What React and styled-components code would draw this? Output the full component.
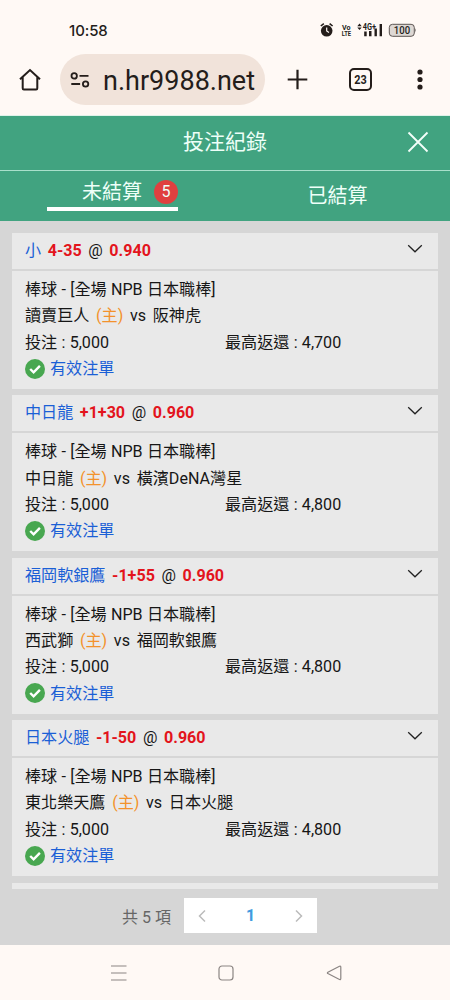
import { useState } from "react";
import styled, { createGlobalStyle } from "styled-components";

const GlobalStyle = createGlobalStyle`
  * {
    box-sizing: border-box;
  }
  body {
    margin: 0;
    background: #fff9f5;
    font-family: Roboto, "Noto Sans CJK TC", sans-serif;
    color: #161616;
  }
  button {
    border: 0;
    padding: 0;
    background: none;
    font: inherit;
    color: inherit;
    cursor: pointer;
  }
  svg {
    display: block;
    flex: none;
  }
`;

const Screen = styled.div`
  width: 450px;
  height: 1000px;
  display: flex;
  flex-direction: column;
  overflow: hidden;
`;

const StatusBar = styled.div`
  height: 54px;
  padding: 6px 33px 0 69px;
  display: flex;
  align-items: center;
  justify-content: space-between;
  color: #241d1a;
`;

const Clock = styled.span`
  font-family: Inter, sans-serif;
  font-size: 15px;
  font-weight: 450;
  letter-spacing: -0.1px;
`;

const StatusIcons = styled.div`
  display: flex;
  align-items: center;
  svg text {
    font-family: Roboto, sans-serif;
    font-weight: 700;
  }
`;

const BrowserBar = styled.div`
  height: 62px;
  padding: 0 25px 10px 19px;
  display: flex;
  align-items: center;
  color: #241d1a;
  border-bottom: 1px solid #dff3ea;
`;

const AddressPill = styled.div`
  width: 205px;
  height: 51px;
  margin: 0 22px 0 19px;
  padding: 0 10px;
  display: flex;
  align-items: center;
  border-radius: 26px;
  background: #f1e3da;
`;

const Url = styled.div`
  flex: 1;
  margin-top: 3px;
  text-align: right;
  white-space: nowrap;
  font-size: 27px;
  line-height: 40px;
`;

const TabCount = styled.button`
  width: 23px;
  height: 23px;
  margin: 0 45px 0 41px;
  border: 2px solid #241d1a;
  border-radius: 5px;
  svg {
    margin: 0 auto;
  }
`;

const Header = styled.header`
  height: 55px;
  padding: 0 21px 0 41px;
  display: flex;
  align-items: center;
  color: #eefff8;
  background: #41a380;
  border-bottom: 1px solid #a9e0cb;
  button {
    margin-bottom: 2px;
  }
  h1 {
    flex: 1;
    margin: 0;
    padding: 0 0 2px 2px;
    text-align: center;
    font-size: 21px;
    font-weight: 400;
    line-height: 30px;
  }
`;

const Tabs = styled.nav`
  height: 50px;
  display: grid;
  grid-template-columns: 1fr 1fr;
  justify-items: center;
  align-items: center;
  color: #eefff8;
  background: #41a380;
`;

const Tab = styled.button`
  width: 131px;
  height: ${(props) => (props.$active ? "40px" : "34px")};
  margin-bottom: ${(props) => (props.$active ? "10px" : "0")};
  padding: ${(props) => (props.$active ? "8px 0 3px" : "0")};
  display: flex;
  align-items: center;
  justify-content: ${(props) => (props.$active ? "flex-end" : "center")};
  border-bottom: ${(props) => (props.$active ? "4px solid #ffffff" : "0")};
  font-size: 20px;
  line-height: 30px;
`;

const Badge = styled.span`
  width: 24px;
  height: 24px;
  margin-left: 12px;
  border-radius: 50%;
  background: #e0403f;
  font-size: 16px;
  line-height: 24px;
  text-align: center;
`;

const List = styled.main`
  height: 668px;
  padding: 12px 12px 0 12.4px;
  display: flex;
  flex-direction: column;
  gap: 6.4px;
  overflow: hidden;
  background: #d6d6d6;
`;

const Card = styled.article`
  flex: none;
  height: 156px;
  background: #e9e9e9;
`;

const CardHead = styled.div`
  height: 38px;
  padding: 0 14.6px 0 12.6px;
  display: flex;
  align-items: center;
  justify-content: space-between;
  border-bottom: 2px solid #d6d6d6;
  svg {
    margin-top: -4px;
  }
`;

const Pick = styled.div`
  display: flex;
  gap: 6.6px;
  font-size: 16.1px;
  line-height: 24px;
  b {
    color: #e3141c;
    font-weight: 700;
  }
`;

const Choice = styled.span`
  color: #1b5fd6;
`;

const CardBody = styled.div`
  padding: 6px 12.6px 0;
  font-size: 16.1px;
  word-spacing: 0.3px;
`;

const Row = styled.div`
  height: 26.3px;
  display: flex;
  align-items: center;
  gap: ${(props) => props.$gap || "0"};
  line-height: 26.3px;
  white-space: nowrap;
  svg {
    margin-top: -1px;
  }
`;

const Home = styled.span`
  color: #f3922b;
`;

const Stake = styled.span`
  width: 200px;
`;

const Valid = styled.span`
  color: #1b5fd6;
`;

const Footer = styled.footer`
  height: 56px;
  padding: 0 133px 3px 0;
  display: flex;
  align-items: center;
  justify-content: flex-end;
  background: #d6d6d6;
  color: #666666;
  font-size: 16px;
`;

const Pager = styled.div`
  width: 133px;
  height: 35px;
  margin-left: 13px;
  padding: 0 13px;
  display: flex;
  align-items: center;
  justify-content: space-between;
  background: #ffffff;
  color: #409be0;
  font-weight: 700;
`;

const SystemNav = styled.div`
  height: 55px;
  padding: 0 108.5px 0 110px;
  display: flex;
  align-items: center;
  justify-content: space-between;
  background: #fff9f5;
`;

const bets = [
  { id: 1, pick: "小", line: "4-35", odds: "0.940", home: "讀賣巨人", away: "阪神虎", stake: "5,000", payout: "4,700" },
  { id: 2, pick: "中日龍", line: "+1+30", odds: "0.960", home: "中日龍", away: "橫濱DeNA灣星", stake: "5,000", payout: "4,800" },
  { id: 3, pick: "福岡軟銀鷹", line: "-1+55", odds: "0.960", home: "西武獅", away: "福岡軟銀鷹", stake: "5,000", payout: "4,800" },
  { id: 4, pick: "日本火腿", line: "-1-50", odds: "0.960", home: "東北樂天鷹", away: "日本火腿", stake: "5,000", payout: "4,800" },
];

const BetCard = ({ bet }) => (
  <Card>
    <CardHead>
      <Pick>
        <Choice>{bet.pick}</Choice>
        <b>{bet.line}</b>
        <span>@</span>
        <b>{bet.odds}</b>
      </Pick>
      <svg width="16" height="10" viewBox="0 0 16 10" fill="none" stroke="#222" strokeWidth="1.3">
        <path d="M1.2 1.3 8 7.8l6.8-6.5" />
      </svg>
    </CardHead>
    <CardBody>
      <Row>棒球 - [全場 NPB 日本職棒]</Row>
      <Row $gap="6.7px">
        <span>{bet.home}</span>
        <Home>(主)</Home>
        <span>vs</span>
        <span>{bet.away}</span>
      </Row>
      <Row>
        <Stake>投注 : {bet.stake}</Stake>
        <span>最高返還 : {bet.payout}</span>
      </Row>
      <Row $gap="5px">
        <svg width="20" height="20" viewBox="0 0 20 20">
          <circle cx="10" cy="10" r="10" fill="#48a750" />
          <path d="m5.2 10 3.4 3.4 6.3-6.5" fill="none" stroke="#fff" strokeWidth="2.4" />
        </svg>
        <Valid>有效注單</Valid>
      </Row>
    </CardBody>
  </Card>
);

const App = () => {
  const [tab, setTab] = useState("open");

  return (
    <>
      <GlobalStyle />
      <Screen>
        <StatusBar>
          <Clock>10:58</Clock>
          <StatusIcons>
            <svg width="98" height="18" viewBox="319 21 98 18" fill="#241d1a">
              {/* alarm */}
              <circle cx="326.7" cy="30.8" r="5.8" />
              <path d="m320.8 26 3-2.4M332.6 26l-3-2.4" stroke="#241d1a" strokeWidth="1.6" />
              <path d="M326.7 27.5v3.5l2.3 1.5" fill="none" stroke="#fff9f5" strokeWidth="1.2" />
              <text x="342" y="29.5" fontSize="7.5" textLength="8.5" lengthAdjust="spacingAndGlyphs">Vo</text>
              <text x="341.7" y="36.3" fontSize="8" textLength="9.3" lengthAdjust="spacingAndGlyphs">LTE</text>
              {/* signal */}
              <path d="m357.3 26.2 2.2-2.6 2.2 2.6zM357.3 27.5l2.2 2.6 2.2-2.6z" />
              <text x="362.8" y="30" fontSize="9" textLength="13.2" lengthAdjust="spacingAndGlyphs">4G+</text>
              <path d="M364.2 31.5h2.5v4.7h-2.5zM369 31h2.5v5.2H369zM374.5 28.5h2.4v7.7h-2.4zM379.6 24h2.4v12.2h-2.4z" />
              {/* battery */}
              <rect x="389.3" y="24.3" width="25" height="12" rx="3.2" fill="#ded8d4" stroke="#5c5552" />
              <path d="M415.2 28.2q1.6 2.1 0 4.2z" fill="#5c5552" />
              <text x="393.8" y="34" fontSize="10" style={{ fontWeight: 500 }} textLength="16.3" lengthAdjust="spacingAndGlyphs">100</text>
            </svg>
          </StatusIcons>
        </StatusBar>
        <BrowserBar>
          <svg width="22" height="23" viewBox="0 0 22 23" fill="none" stroke="#241d1a" strokeWidth="2">
            <path d="M1 11.2 11 2l10 9.2M3.7 9.2v11.1q0 1.2 1.2 1.2h12.2q1.2 0 1.2-1.2V9.2" />
          </svg>
          <AddressPill>
            <svg width="20" height="16" viewBox="0 0 20 16" fill="none" stroke="#241d1a" strokeWidth="1.8">
              <circle cx="4.2" cy="3.9" r="2.7" />
              <circle cx="15.6" cy="12" r="2.7" />
              <path d="M9.5 3.9h9M1.3 12h8.8" />
            </svg>
            <Url>n.hr9988.net</Url>
          </AddressPill>
          <svg width="21" height="21" viewBox="0 0 21 21" stroke="#241d1a" strokeWidth="2.2">
            <path d="M10.5 .7v19.6M.7 10.5h19.6" />
          </svg>
          <TabCount>
            <svg width="15" height="15" viewBox="0 0 15 15" fill="#241d1a">
              <text x="1.3" y="12" fontFamily="Roboto, sans-serif" fontWeight="700" fontSize="12.5" textLength="12.5" lengthAdjust="spacingAndGlyphs">23</text>
            </svg>
          </TabCount>
          <svg width="6" height="21" viewBox="0 0 6 21" fill="#241d1a">
            <circle cx="3" cy="3" r="2.6" />
            <circle cx="3" cy="10.5" r="2.6" />
            <circle cx="3" cy="18" r="2.6" />
          </svg>
        </BrowserBar>
        <Header>
          <h1>投注紀錄</h1>
          <button aria-label="close">
            <svg width="22" height="22" viewBox="0 0 22 22" stroke="#f4fffb" strokeWidth="1.8">
              <path d="m1.5 1.5 19 19M20.5 1.5l-19 19" />
            </svg>
          </button>
        </Header>
        <Tabs>
          <Tab $active={tab === "open"} onClick={() => setTab("open")}>
            未結算<Badge>5</Badge>
          </Tab>
          <Tab $active={tab === "settled"} onClick={() => setTab("settled")}>
            已結算
          </Tab>
        </Tabs>
        <List>
          {bets.map((bet) => (
            <BetCard key={bet.id} bet={bet} />
          ))}
          <Card />
        </List>
        <Footer>
          共 5 項
          <Pager>
            <svg width="10" height="14" viewBox="0 0 10 14" fill="none" stroke="#bbb" strokeWidth="1.5">
              <path d="M8 1.5 2.5 7 8 12.5" />
            </svg>
            1
            <svg width="10" height="14" viewBox="0 0 10 14" fill="none" stroke="#bbb" strokeWidth="1.5">
              <path d="M2 1.5 7.5 7 2 12.5" />
            </svg>
          </Pager>
        </Footer>
        <SystemNav>
          <svg width="17" height="16" viewBox="0 0 17 16" stroke="#8b8583" strokeWidth="1.2">
            <path d="M1 1h15.5M1 8h15.5M1 15h15.5" />
          </svg>
          <svg width="16" height="16" viewBox="0 0 16 16" fill="none" stroke="#8b8583" strokeWidth="1.2">
            <rect x="1" y="1" width="14" height="14" rx="3" />
          </svg>
          <svg width="16" height="16" viewBox="0 0 16 16" fill="none" stroke="#8b8583" strokeWidth="1.2">
            <path d="M13.5 1.3 1.9 7.2q-1 .7 0 1.4l11.6 5.9q1.3.4 1.3-.9V2.2q0-1.3-1.3-.9z" />
          </svg>
        </SystemNav>
      </Screen>
    </>
  );
};

export default App;
